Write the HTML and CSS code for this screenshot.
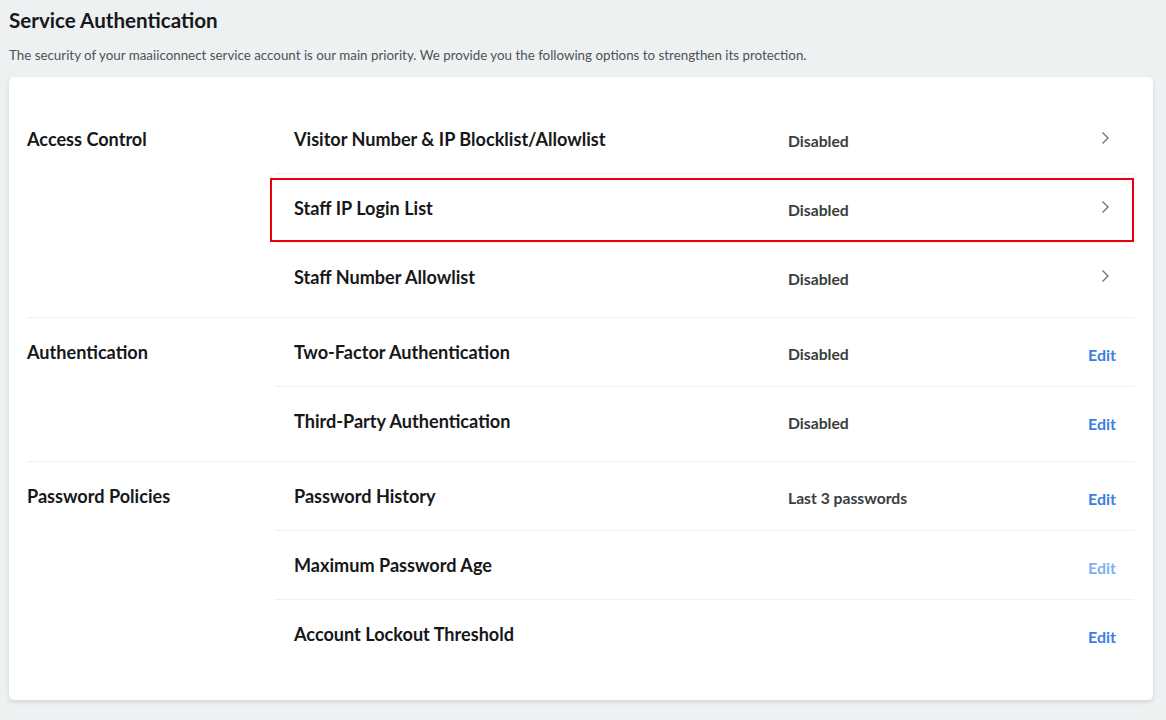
FILE: index.html
```html
<!DOCTYPE html>
<html lang="en">
<head>
<meta charset="utf-8">
<title>Service Authentication</title>
<link rel="stylesheet" href="styles.css">
</head>
<body>
<div class="page">
  <h1 class="title">Service Authentication</h1>
  <p class="subtitle">The security of your maaiiconnect service account is our main priority. We provide you the following options to strengthen its protection.</p>
  <div class="card">
    <section class="group">
      <div class="group-label">Access Control</div>
      <div class="rows">
        <div class="row">
          <div class="row-title">Visitor Number &amp; IP Blocklist/Allowlist</div>
          <div class="row-status">Disabled</div>
          <div class="row-action"><svg class="chev" width="10" height="14" viewBox="0 0 10 14"><path d="M2.5 1.5 L8 7 L2.5 12.5" fill="none" stroke="#6b6f73" stroke-width="1.3"/></svg></div>
        </div>
        <div class="row highlight">
          <div class="row-title">Staff IP Login List</div>
          <div class="row-status">Disabled</div>
          <div class="row-action"><svg class="chev" width="10" height="14" viewBox="0 0 10 14"><path d="M2.5 1.5 L8 7 L2.5 12.5" fill="none" stroke="#6b6f73" stroke-width="1.3"/></svg></div>
        </div>
        <div class="row">
          <div class="row-title">Staff Number Allowlist</div>
          <div class="row-status">Disabled</div>
          <div class="row-action"><svg class="chev" width="10" height="14" viewBox="0 0 10 14"><path d="M2.5 1.5 L8 7 L2.5 12.5" fill="none" stroke="#6b6f73" stroke-width="1.3"/></svg></div>
        </div>
      </div>
    </section>
    <section class="group">
      <div class="group-label">Authentication</div>
      <div class="rows">
        <div class="row">
          <div class="row-title">Two-Factor Authentication</div>
          <div class="row-status">Disabled</div>
          <div class="row-action"><span class="edit">Edit</span></div>
        </div>
        <div class="row">
          <div class="row-title">Third-Party Authentication</div>
          <div class="row-status">Disabled</div>
          <div class="row-action"><span class="edit">Edit</span></div>
        </div>
      </div>
    </section>
    <section class="group">
      <div class="group-label">Password Policies</div>
      <div class="rows">
        <div class="row">
          <div class="row-title">Password History</div>
          <div class="row-status">Last 3 passwords</div>
          <div class="row-action"><span class="edit">Edit</span></div>
        </div>
        <div class="row">
          <div class="row-title">Maximum Password Age</div>
          <div class="row-status"></div>
          <div class="row-action"><span class="edit light">Edit</span></div>
        </div>
        <div class="row">
          <div class="row-title">Account Lockout Threshold</div>
          <div class="row-status"></div>
          <div class="row-action"><span class="edit">Edit</span></div>
        </div>
      </div>
    </section>
  </div>
</div>
</body>
</html>
```

FILE: styles.css
```css
* { box-sizing: border-box; }
html, body {
  margin: 0;
  padding: 0;
  background: #eef1f2;
  font-family: Lato, "Liberation Sans", sans-serif;
  color: #1b1d1f;
}
.page {
  padding: 8px 13px 20px 9px;
}
.title {
  margin: 0;
  font-size: 20.6px;
  line-height: 24px;
  font-weight: 700;
  color: #16181a;
}
.subtitle {
  margin: 14px 0 0 0;
  font-size: 13.35px;
  line-height: 18px;
  color: #4d5256;
}
.card {
  margin-top: 13px;
  background: #ffffff;
  border-radius: 5px;
  box-shadow: 0 2px 4px rgba(40, 50, 60, 0.14);
  padding: 28px 19px 32px 18px;
}
.group {
  display: flex;
  padding-bottom: 6px;
  border-bottom: 1px solid #eff0f1;
}
.group:last-child {
  border-bottom: none;
  padding-bottom: 0;
}
.group-label {
  width: 248px;
  flex: none;
  height: 68px;
  display: flex;
  align-items: center;
  font-size: 18.1px;
  font-weight: 700;
  color: #16181a;
}
.rows {
  flex: 1;
}
.row {
  position: relative;
  display: flex;
  align-items: center;
  height: 69px;
  padding: 0 18px 0 19px;
  border-bottom: 1px solid #eff0f1;
}
.row:last-child {
  border-bottom: none;
  height: 68px;
}
.row-title {
  width: 494px;
  flex: none;
  font-size: 18.1px;
  font-weight: 700;
  color: #16181a;
}
.row-status {
  flex: 1;
  font-size: 15.7px;
  font-weight: 700;
  color: #3a3d40;
  padding-top: 3px;
}
.row-action {
  display: flex;
  align-items: center;
  justify-content: flex-end;
  padding-top: 2px;
}
.chev {
  display: block;
  margin-right: 6px;
  margin-top: -4px;
}
.edit {
  font-size: 16px;
  font-weight: 700;
  color: #3b80e0;
  padding-top: 2px;
}
.edit.light {
  color: #7fb0ef;
}
.highlight::after {
  content: "";
  position: absolute;
  left: -5px;
  right: 0;
  top: 4px;
  bottom: 0;
  border: 2.5px solid #e8000b;
  pointer-events: none;
}
```
